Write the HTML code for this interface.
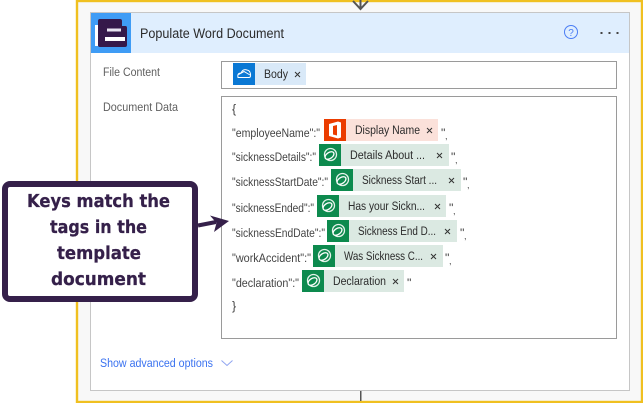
<!DOCTYPE html>
<html>
<head>
<meta charset="utf-8">
<style>
html,body{margin:0;padding:0;background:#fff;width:643px;height:403px;overflow:hidden}
svg{display:block}
text{font-family:"Liberation Sans",sans-serif;font-size:12.4px;fill:#323130}
.k{fill:#444}
.t{fill:#2b2b2b}
.c{font-family:"DejaVu Sans",sans-serif;font-weight:bold;font-size:18px;fill:#35204a;stroke:#35204a;stroke-width:.25px;text-anchor:middle}
</style>
</head>
<body>
<svg width="643" height="403" viewBox="0 0 643 403" xmlns="http://www.w3.org/2000/svg">
<defs>
<g id="dv">
<rect width="22" height="22" fill="#0d8a4e"/>
<circle cx="11.500" cy="10.500" r="6" fill="none" stroke="#e4f2ea" stroke-width="1.300"/>
<ellipse cx="10.500" cy="11.500" rx="5" ry="3" transform="rotate(-35 10.500 11.500)" fill="#0d8a4e" stroke="#fff" stroke-width="1.300"/>
</g>
<path id="xx" d="M0 0L5 5M5 0L0 5" stroke="#333" stroke-width="1" fill="none"/>
</defs>

<rect x="77" y="1" width="565" height="401" fill="#f8f8f8" stroke="#f0c020" stroke-width="2.4"/>
<path d="M353 1L360.500 9L368 1" fill="none" stroke="#555" stroke-width="2"/>
<path d="M360.500 0V9" stroke="#555" stroke-width="2"/>
<rect x="360" y="391" width="1.500" height="10" fill="#555"/>

<rect x="90.500" y="12.500" width="539" height="378" fill="#fff" stroke="#c6c6c6"/>
<rect x="91" y="13" width="538" height="40" fill="#dfeefe"/>
<rect x="91" y="13" width="40" height="40" fill="#3f9cf5"/>
<path d="M100 19H120Q122 19 122 21V26H125.500Q127 26 127 28V45Q127 47 125 47H100Q98 47 98 45V21Q98 19 100 19Z" fill="#35194a"/>
<rect x="95" y="25" width="3" height="21" fill="#fff"/>
<rect x="107" y="28.500" width="14" height="3" fill="#e8e4f0"/>
<rect x="105" y="37" width="20" height="4" fill="#fff"/>
<text x="140" y="38" class="t" style="font-size:13.500px" textLength="144" lengthAdjust="spacingAndGlyphs">Populate Word Document</text>

<circle cx="571" cy="32" r="6.500" fill="none" stroke="#4a7df5" stroke-width="1"/>
<text x="571" y="36" style="font-size:10px;fill:#4a7df5" text-anchor="middle">?</text>
<rect x="600.500" y="32" width="2" height="2" fill="#444"/>
<rect x="608.500" y="32" width="2" height="2" fill="#444"/>
<rect x="616.500" y="32" width="2" height="2" fill="#444"/>

<text x="103" y="76" style="fill:#5f5f5f" textLength="57" lengthAdjust="spacingAndGlyphs">File Content</text>
<text x="103" y="111" style="fill:#5f5f5f" textLength="75" lengthAdjust="spacingAndGlyphs">Document Data</text>

<rect x="221.500" y="61.500" width="395" height="27" fill="#fff" stroke="#9a9a9a"/>
<rect x="233" y="63" width="73" height="22" fill="#d9e9f8"/>
<rect x="233" y="63" width="22" height="22" fill="#0a78d4"/>
<path d="M238 77.500Q237 73 241 73Q243 68.500 247 70Q250 70.500 250.500 74Q251 77.500 249 77.500ZM238.500 74.500L244 71.500L250 75" fill="none" stroke="#fff" stroke-width="1"/>
<text x="264" y="78" class="t" textLength="24" lengthAdjust="spacingAndGlyphs">Body</text>
<use href="#xx" x="295" y="72"/>

<rect x="221.500" y="96.500" width="395" height="242" fill="#fff" stroke="#9a9a9a"/>
<text x="232" y="113" class="k">{</text>
<text x="232" y="310" class="k">}</text>

<text x="232" y="137" class="k" textLength="88" lengthAdjust="spacingAndGlyphs">"employeeName":"</text>
<rect x="324" y="119" width="114" height="22" fill="#fbe1da"/>
<rect x="324" y="119" width="22" height="22" fill="#eb3c00"/>
<path d="M329 124L338 121.500L341 122.500V137.500L338 138.500L329 136ZM333 126V134.500L337 135.500V125Z" fill="#fff" fill-rule="evenodd"/>
<text x="355" y="134" class="t" textLength="65" lengthAdjust="spacingAndGlyphs">Display Name</text>
<use href="#xx" x="427" y="128"/>
<text x="441" y="137" class="k">"</text><text x="445" y="139" class="k" style="font-size:9px">,</text>

<text x="232" y="161" class="k" textLength="84" lengthAdjust="spacingAndGlyphs">"sicknessDetails":"</text>
<rect x="319" y="144" width="130" height="22" fill="#dbe9e2"/>
<use href="#dv" x="319" y="144"/>
<text x="350" y="159" class="t" textLength="75" lengthAdjust="spacingAndGlyphs">Details About ...</text>
<use href="#xx" x="437" y="153"/>
<text x="451" y="161" class="k">"</text><text x="455" y="163" class="k" style="font-size:9px">,</text>

<text x="232" y="186" class="k" textLength="96" lengthAdjust="spacingAndGlyphs">"sicknessStartDate":"</text>
<rect x="331" y="169" width="130" height="22" fill="#dbe9e2"/>
<use href="#dv" x="331" y="169"/>
<text x="362" y="184" class="t" textLength="75" lengthAdjust="spacingAndGlyphs">Sickness Start ...</text>
<use href="#xx" x="449" y="178"/>
<text x="463" y="186" class="k">"</text><text x="467" y="188" class="k" style="font-size:9px">,</text>

<text x="232" y="212" class="k" textLength="82" lengthAdjust="spacingAndGlyphs">"sicknessEnded":"</text>
<rect x="317" y="195" width="129" height="22" fill="#dbe9e2"/>
<use href="#dv" x="317" y="195"/>
<text x="348" y="210" class="t" textLength="77" lengthAdjust="spacingAndGlyphs">Has your Sickn...</text>
<use href="#xx" x="435" y="204"/>
<text x="449" y="212" class="k">"</text><text x="453" y="214" class="k" style="font-size:9px">,</text>

<text x="232" y="237" class="k" textLength="93" lengthAdjust="spacingAndGlyphs">"sicknessEndDate":"</text>
<rect x="327" y="220" width="130" height="22" fill="#dbe9e2"/>
<use href="#dv" x="327" y="220"/>
<text x="358" y="235" class="t" textLength="78" lengthAdjust="spacingAndGlyphs">Sickness End D...</text>
<use href="#xx" x="445" y="229"/>
<text x="460" y="237" class="k">"</text><text x="464" y="239" class="k" style="font-size:9px">,</text>

<text x="232" y="262" class="k" textLength="79" lengthAdjust="spacingAndGlyphs">"workAccident":"</text>
<rect x="313" y="245" width="130" height="22" fill="#dbe9e2"/>
<use href="#dv" x="313" y="245"/>
<text x="344" y="260" class="t" textLength="79" lengthAdjust="spacingAndGlyphs">Was Sickness C...</text>
<use href="#xx" x="431" y="254"/>
<text x="445" y="262" class="k">"</text><text x="449" y="264" class="k" style="font-size:9px">,</text>

<text x="232" y="287" class="k" textLength="67" lengthAdjust="spacingAndGlyphs">"declaration":"</text>
<rect x="302" y="270" width="102" height="22" fill="#dbe9e2"/>
<use href="#dv" x="302" y="270"/>
<text x="333" y="285" class="t" textLength="53" lengthAdjust="spacingAndGlyphs">Declaration</text>
<use href="#xx" x="393" y="279"/>
<text x="407" y="287" class="k">"</text>

<text x="100" y="367" style="fill:#3a72f0" textLength="113" lengthAdjust="spacingAndGlyphs">Show advanced options</text>
<path d="M221.500 360.500L227 365.500L232.500 360.500" fill="none" stroke="#8fa4f0" stroke-width="1"/>

<rect x="5" y="184" width="190" height="115" rx="5" fill="#fff" stroke="#35204a" stroke-width="6"/>
<text x="98.500" y="207" class="c" textLength="143" lengthAdjust="spacingAndGlyphs">Keys match the</text>
<text x="98.500" y="233" class="c" textLength="97" lengthAdjust="spacingAndGlyphs">tags in the</text>
<text x="99" y="259" class="c" textLength="84" lengthAdjust="spacingAndGlyphs">template</text>
<text x="98.500" y="285" class="c" textLength="95" lengthAdjust="spacingAndGlyphs">document</text>

<path d="M198 225.500L216 222" stroke="#35204a" stroke-width="4" fill="none"/>
<path d="M210 215.500L229 221L214 232L216.500 223Z" fill="#35204a"/>
</svg>
</body>
</html>
